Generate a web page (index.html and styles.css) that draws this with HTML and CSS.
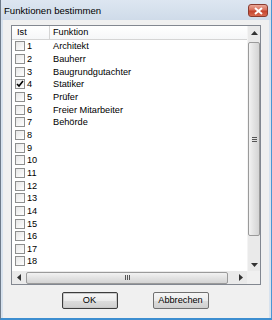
FILE: index.html
```html
<!DOCTYPE html>
<html>
<head>
<meta charset="utf-8">
<link rel="stylesheet" href="styles.css">
</head>
<body>
<div class="window">
  <div class="titlebar">
    <span class="title">Funktionen bestimmen</span>
    <span class="close"><svg width="11" height="8" viewBox="0 0 11 8"><path d="M2 1 L9 7 M9 1 L2 7" stroke="#fff" stroke-width="2"/></svg></span>
  </div>
  <div class="client">
    <div class="listview">
      <div class="content">
        <div class="header">
          <div class="hcol c1">Ist</div>
          <div class="hcol c2">Funktion</div>
        </div>
        <div class="rows">
          <div class="row"><span class="cb"></span><span class="num">1</span><span class="fn">Architekt</span></div>
          <div class="row"><span class="cb"></span><span class="num">2</span><span class="fn">Bauherr</span></div>
          <div class="row"><span class="cb"></span><span class="num">3</span><span class="fn">Baugrundgutachter</span></div>
          <div class="row"><span class="cb checked"><svg width="8" height="8" viewBox="0 0 8 8"><path d="M1 4 L3 6 L7 1" stroke="#000" stroke-width="1.6" fill="none"/></svg></span><span class="num">4</span><span class="fn">Statiker</span></div>
          <div class="row"><span class="cb"></span><span class="num">5</span><span class="fn">Prüfer</span></div>
          <div class="row"><span class="cb"></span><span class="num">6</span><span class="fn">Freier Mitarbeiter</span></div>
          <div class="row"><span class="cb"></span><span class="num">7</span><span class="fn">Behörde</span></div>
          <div class="row"><span class="cb"></span><span class="num">8</span><span class="fn"></span></div>
          <div class="row"><span class="cb"></span><span class="num">9</span><span class="fn"></span></div>
          <div class="row"><span class="cb"></span><span class="num">10</span><span class="fn"></span></div>
          <div class="row"><span class="cb"></span><span class="num">11</span><span class="fn"></span></div>
          <div class="row"><span class="cb"></span><span class="num">12</span><span class="fn"></span></div>
          <div class="row"><span class="cb"></span><span class="num">13</span><span class="fn"></span></div>
          <div class="row"><span class="cb"></span><span class="num">14</span><span class="fn"></span></div>
          <div class="row"><span class="cb"></span><span class="num">15</span><span class="fn"></span></div>
          <div class="row"><span class="cb"></span><span class="num">16</span><span class="fn"></span></div>
          <div class="row"><span class="cb"></span><span class="num">17</span><span class="fn"></span></div>
          <div class="row"><span class="cb"></span><span class="num">18</span><span class="fn"></span></div>
        </div>
      </div>
      <div class="vscroll">
        <div class="sbtn"><svg width="7" height="4" viewBox="0 0 7 4"><path d="M0 4 L3.5 0 L7 4 Z" fill="#333"/></svg></div>
        <div class="vthumb"><span class="grip-v"></span></div>
        <div class="vtrack"></div>
        <div class="sbtn"><svg width="7" height="4" viewBox="0 0 7 4"><path d="M0 0 L3.5 4 L7 0 Z" fill="#333"/></svg></div>
      </div>
      <div class="hscroll">
        <div class="hbtn"><svg width="4" height="7" viewBox="0 0 4 7"><path d="M4 0 L0 3.5 L4 7 Z" fill="#333"/></svg></div>
        <div class="hthumb"><span class="grip-h"></span></div>
        <div class="htrack"></div>
        <div class="hbtn"><svg width="4" height="7" viewBox="0 0 4 7"><path d="M0 0 L4 3.5 L0 7 Z" fill="#333"/></svg></div>
      </div>
      <div class="corner"></div>
    </div>
    <div class="buttons">
      <div class="btn default">OK</div>
      <div class="btn">Abbrechen</div>
    </div>
  </div>
</div>
</body>
</html>
```
FILE: styles.css
```css
html, body {
  margin: 0;
  padding: 0;
  width: 272px;
  height: 320px;
  overflow: hidden;
  background: #f0f0f0;
  font-family: "Liberation Sans", Arial, sans-serif;
}
.window {
  width: 272px;
  height: 320px;
  box-sizing: border-box;
  border-left: 1px solid #6e7b8a;
  border-right: 1px solid #4a97d4;
  border-bottom: 2px solid #3d8ed0;
  background: #d7e2ee;
  display: flex;
  flex-direction: column;
}
.titlebar {
  height: 20px;
  flex: none;
  display: flex;
  align-items: center;
  justify-content: space-between;
  padding: 0 3px 0 3px;
  background: linear-gradient(#dde6f1, #cfdbe9);
}
.title {
  font-size: 9.6px;
  color: #000;
  padding-top: 1px;
}
.close {
  width: 20px;
  height: 13px;
  box-sizing: border-box;
  border: 1px solid #8a3b2f;
  border-radius: 3px;
  background: linear-gradient(#eaa898 0%, #d7705c 45%, #c4432d 55%, #d86a50 100%);
  display: flex;
  align-items: center;
  justify-content: center;
  margin-top: 1px;
}
.client {
  flex: 1;
  margin: 0 2px 0 2px;
  background: #f0f0f0;
  padding: 5px 9px 0 8px;
  display: flex;
  flex-direction: column;
}
.listview {
  width: 250px;
  height: 260px;
  box-sizing: border-box;
  border: 1px solid #828790;
  background: #fff;
  display: grid;
  grid-template-columns: 235px 13px;
  grid-template-rows: 245px 13px;
}
.content {
  overflow: hidden;
  font-size: 9.2px;
  color: #000;
}
.header {
  height: 14px;
  display: flex;
  background: linear-gradient(#ffffff, #f6f7f8);
  border-bottom: 1px solid #d5d5d5;
  box-sizing: border-box;
}
.hcol {
  height: 13px;
  line-height: 13px;
  box-sizing: border-box;
}
.c1 {
  width: 38px;
  padding-left: 5px;
  border-right: 1px solid #d5d5d5;
}
.c2 {
  padding-left: 3px;
}
.rows {
  display: flex;
  flex-direction: column;
}
.row {
  height: 12.67px;
  display: flex;
  align-items: center;
}
.cb {
  width: 10px;
  height: 10px;
  box-sizing: border-box;
  border: 1px solid #8e8f8f;
  background: linear-gradient(135deg, #e6e6e6, #ffffff);
  margin-left: 3px;
  display: flex;
  align-items: center;
  justify-content: center;
}
.num {
  width: 28px;
  padding-left: 2px;
  box-sizing: border-box;
}
.fn {
  padding-left: 0;
}
.vscroll {
  background: #eaeaea;
  display: flex;
  flex-direction: column;
  border-left: 1px solid #f4f4f4;
}
.sbtn {
  height: 13px;
  display: flex;
  align-items: center;
  justify-content: center;
  flex: none;
}
.vthumb {
  height: 194px;
  margin: 3px 0 0 0;
  box-sizing: border-box;
  border: 1px solid #9a9a9a;
  border-radius: 2px;
  background: linear-gradient(90deg, #f2f2f2, #e2e2e2 50%, #d4d4d4);
  display: flex;
  align-items: center;
  justify-content: center;
  flex: none;
}
.grip-v {
  width: 5px;
  height: 5px;
  background: repeating-linear-gradient(#555 0 1px, transparent 1px 2px);
}
.vtrack {
  flex: 1;
}
.hscroll {
  background: #eaeaea;
  display: flex;
  align-items: center;
}
.hbtn {
  width: 13px;
  height: 13px;
  display: flex;
  align-items: center;
  justify-content: center;
  flex: none;
}
.hthumb {
  width: 202px;
  height: 12px;
  margin-left: 1px;
  box-sizing: border-box;
  border: 1px solid #9a9a9a;
  border-radius: 2px;
  background: linear-gradient(#f2f2f2, #e2e2e2 50%, #d4d4d4);
  display: flex;
  align-items: center;
  justify-content: center;
  flex: none;
}
.grip-h {
  width: 5px;
  height: 5px;
  background: repeating-linear-gradient(90deg, #555 0 1px, transparent 1px 2px);
}
.htrack {
  flex: 1;
}
.corner {
  background: #f0f0f0;
}
.buttons {
  display: flex;
  justify-content: center;
  gap: 35px;
  margin-top: 7px;
  padding-right: 1px;
}
.btn {
  height: 17px;
  box-sizing: border-box;
  border: 1px solid #707070;
  border-radius: 2px;
  background: linear-gradient(#f6f6f6, #ebebeb 50%, #dddddd 51%, #cfcfcf);
  font-size: 9.2px;
  line-height: 15px;
  text-align: center;
  color: #000;
  width: 56px;
}
.btn.default {
  border-color: #3c3c3c;
  box-shadow: inset 0 0 0 1px #c8c8c8;
}
```
